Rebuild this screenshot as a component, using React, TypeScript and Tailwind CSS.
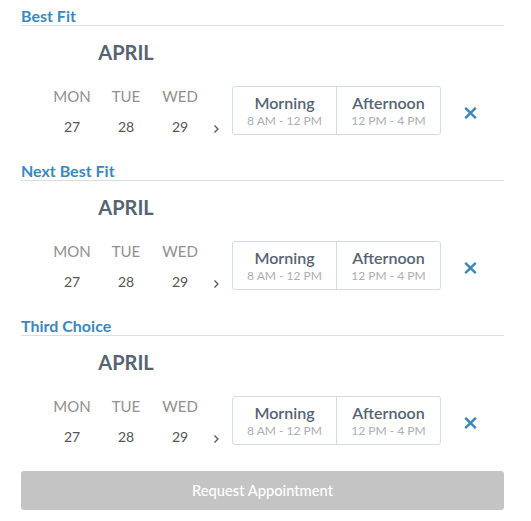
import React from "react";

const days = [
  { d: "MON", n: "27" },
  { d: "TUE", n: "28" },
  { d: "WED", n: "29" },
];

function Section({ title }: { title: string }) {
  return (
    <div className="flex flex-col">
      <div className="border-b border-[#dadee3] text-[16px] leading-[19px] font-bold text-[#3a88bd]">
        {title}
      </div>
      <div className="mt-[14px] ml-[24px] w-[162px] text-center text-[20px] leading-[24px] font-bold text-[#566373]">
        APRIL
      </div>
      <div className="mt-[22px] pl-[24px] flex items-start">
        <div className="flex">
          {days.map((x) => (
            <div key={x.d} className="w-[54px] flex flex-col items-center pt-[1px]">
              <div className="text-[15px] leading-[18px] text-[#909090]">{x.d}</div>
              <div className="mt-[13px] text-[14px] leading-[17px] text-[#555555]">{x.n}</div>
            </div>
          ))}
        </div>
        <svg className="ml-[6px] mt-[38px]" width="7" height="10" viewBox="0 0 7 10">
          <polyline points="1.5,1.5 5,5 1.5,8.5" fill="none" stroke="#555" strokeWidth="1.3" />
        </svg>
        <div className="ml-[12px] flex rounded-[3px] border border-[#d2dae3]">
          <div className="w-[103px] flex flex-col items-center pt-[6px] pb-[6px]">
            <div className="text-[16px] leading-[19px] font-semibold text-[#566373]">Morning</div>
            <div className="mt-[2px] text-[12px] leading-[14px] text-[#a9aeb5]">8 AM - 12 PM</div>
          </div>
          <div className="w-[104px] flex flex-col items-center pt-[6px] pb-[6px] border-l border-[#d2dae3]">
            <div className="text-[16px] leading-[19px] font-semibold text-[#566373]">Afternoon</div>
            <div className="mt-[2px] text-[12px] leading-[14px] text-[#a9aeb5]">12 PM - 4 PM</div>
          </div>
        </div>
        <svg className="ml-[23px] mt-[21px]" width="13" height="12" viewBox="0 0 13 12">
          <path d="M1.2 0.8 L11.8 11.2 M11.8 0.8 L1.2 11.2" stroke="#3a88bd" strokeWidth="2.4" fill="none" />
        </svg>
      </div>
    </div>
  );
}

export default function App() {
  return (
    <div
      className="w-[531px] h-[521px] bg-white pl-[21px] pt-[6px]"
      style={{ fontFamily: "Lato, 'Open Sans', sans-serif" }}
    >
      <div className="w-[483px] flex flex-col gap-[26px]">
        <Section title="Best Fit" />
        <Section title="Next Best Fit" />
        <Section title="Third Choice" />
        <button className="h-[39px] w-full rounded-[3px] bg-[#c4c4c4] text-[14.7px] font-medium text-white">
          Request Appointment
        </button>
      </div>
    </div>
  );
}
